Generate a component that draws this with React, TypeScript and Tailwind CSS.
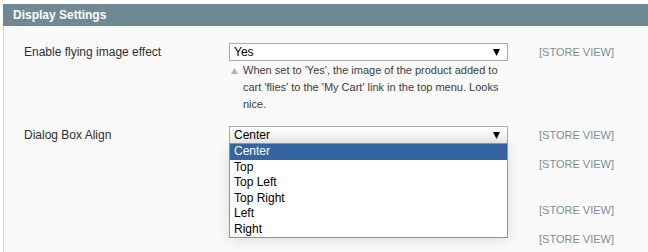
import React from 'react';

const options = ['Center', 'Top', 'Top Left', 'Top Right', 'Left', 'Right'];

function Arrow() {
  return (
    <svg width="7" height="7" viewBox="0 0 7 7" className="shrink-0">
      <path d="M0 0 H7 L3.5 7 Z" fill="#000" />
    </svg>
  );
}

function Select({ value, shaded }: { value: string; shaded?: boolean }) {
  return (
    <div
      className={
        'h-[18px] w-[279px] border border-[#aaaaaa] flex items-center justify-between pl-[4px] pr-[7px] text-[12px] text-black ' +
        (shaded ? 'bg-gradient-to-b from-white to-[#ececec]' : 'bg-white')
      }
    >
      <span>{value}</span>
      <Arrow />
    </div>
  );
}

function Scope() {
  return <div className="ml-[31px] h-[18px] flex items-center text-[11px] text-[#7d8d97]">[STORE VIEW]</div>;
}

export default function App() {
  return (
    <div className="w-[648px] h-[252px] bg-white pt-[4px] overflow-hidden font-['Liberation_Sans',Arial,sans-serif]">
      <div className="ml-[3px] h-[248px] border-l border-[#d4d4d4] bg-[#fafafa]">
        <div className="h-[22px] bg-[#6f8a93] flex items-center px-[10px] text-[12px] font-bold text-white -ml-px">
          Display Settings
        </div>
        <div className="h-px bg-white" />
        <div className="pt-[16px] flex flex-col gap-[11px]">
          <div className="flex items-start">
            <div className="w-[225px] h-[18px] pl-[20px] flex items-center text-[12px] text-[#2f2f2f]">Enable flying image effect</div>
            <div className="w-[279px]">
              <Select value="Yes" />
              <div className="flex items-start gap-[5px] pl-[2px] pt-[1px] text-[11px] leading-[17px] text-[#3c3c3c]">
                <svg width="7" height="6" viewBox="0 0 7 6" className="mt-[6px] shrink-0">
                  <path d="M3.5 0 L7 6 H0 Z" fill="#a7b8c3" />
                </svg>
                <span>When set to 'Yes', the image of the product added to cart 'flies' to the 'My Cart' link in the top menu. Looks nice.</span>
              </div>
            </div>
            <Scope />
          </div>

          <div className="flex items-start relative mt-[2px]">
            <div className="w-[225px] h-[18px] pl-[20px] flex items-center text-[12px] text-[#2f2f2f]">Dialog Box Align</div>
            <div className="w-[279px] relative">
              <Select value="Center" shaded />
              <div className="absolute left-0 top-[17px] z-10 w-[279px] border border-[#7f97b3] bg-white shadow-[0_2px_14px_rgba(0,0,0,0.12)] text-[12px] text-black">
                {options.map((o, i) => (
                  <div
                    key={o}
                    className={'h-[15.5px] leading-[15.5px] pl-[4px] ' + (i === 0 ? 'bg-[#3464a2] text-white' : '')}
                  >
                    {o}
                  </div>
                ))}
              </div>
            </div>
            <Scope />
          </div>

          <div className="flex items-start">
            <div className="w-[225px] h-[18px]" />
            <div className="w-[279px] h-[35px]" />
            <Scope />
          </div>

          <div className="flex items-start">
            <div className="w-[225px] h-[18px]" />
            <div className="w-[279px] h-[18px]" />
            <Scope />
          </div>

          <div className="flex items-start">
            <div className="w-[225px] h-[18px]" />
            <div className="w-[279px] h-[18px]" />
            <Scope />
          </div>
        </div>
      </div>
    </div>
  );
}
